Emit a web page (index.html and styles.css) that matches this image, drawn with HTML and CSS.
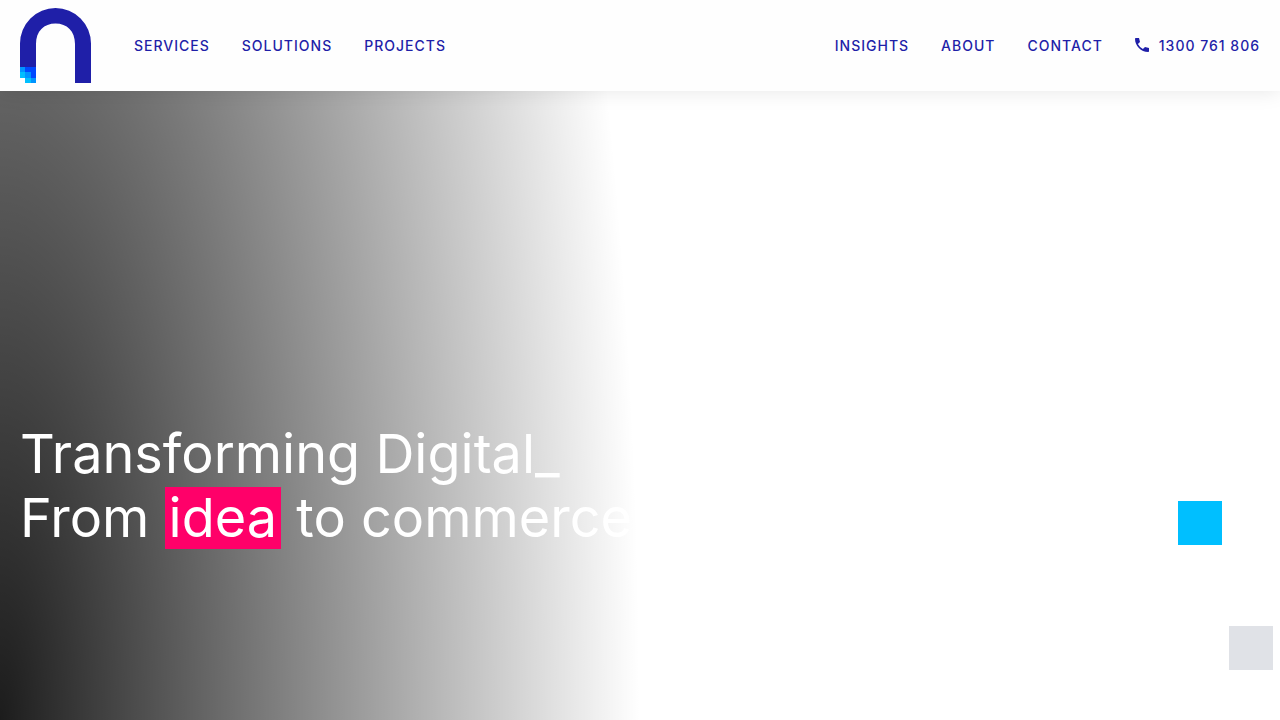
FILE: index.html
```html
<!DOCTYPE html>
<html lang="en">
<head>
    <meta charset="UTF-8">
    <meta name="viewport" content="width=device-width, initial-scale=1.0">
    <title>Transforming Digital</title>
    <link rel="stylesheet" href="styles.css">
</head>
<body>
    <header class="header">
        <a href="#" class="logo" aria-label="Home">
            <svg width="71" height="75" viewBox="0 0 71 75">
                <path fill="#1f1fa8" d="M0 75V35.500a35.500 35.500 0 0 1 71 0V75H55V36C55 23 47 15.500 35.500 15.500S16 23 16 36V75z"/>
                <!-- pixels at the foot of the logo -->
                <path fill="#0048ff" d="M0 59h16v16H0z"/>
                <path fill="#fefefe" d="M0 70h5v5H0z"/>
                <path fill="#0094ff" d="M0 59h5v5H0zM5 64h6v6H5zM11 70h5v5h-5z"/>
                <path fill="#00bfff" d="M0 64h5v6H0zM5 70h6v5H5z"/>
            </svg>
        </a>
        <nav class="nav nav-left">
            <a href="#">SERVICES</a>
            <a href="#">SOLUTIONS</a>
            <a href="#">PROJECTS</a>
        </nav>
        <nav class="nav nav-right">
            <a href="#">INSIGHTS</a>
            <a href="#">ABOUT</a>
            <a href="#">CONTACT</a>
            <a href="tel:1300761806" class="phone">
                <svg width="14" height="14" viewBox="0 0 14 14">
                    <path fill="currentColor" d="M.8 0H4l1 4-2.100 2.100a12 12 0 0 0 5 5L10 9l4 1v3.200a.8.8 0 0 1-.8.8C6 14 0 8 0 .8A.8.8 0 0 1 .8 0z"/>
                </svg>
                1300 761 806
            </a>
        </nav>
    </header>
    <main class="hero">
        <h1>Transforming Digital_<br>From <span class="highlight">idea</span> to commerce</h1>
        <div class="square square-blue"></div>
        <div class="square square-grey"></div>
    </main>
</body>
</html>
```
FILE: styles.css
```css
* {
    box-sizing: border-box;
}

body {
    margin: 0;
    min-height: 100vh;
    display: flex;
    flex-direction: column;
    background-color: #fff;
    font-family: Inter, sans-serif;
}

.header {
    position: relative;
    z-index: 1;
    display: flex;
    align-items: center;
    padding: 8px 20px;
    background-color: #fefefe;
    box-shadow: 0 0 20px rgba(0, 0, 0, 0.1);
}

.logo svg {
    display: block;
}

.nav {
    display: flex;
    gap: 32px;
}

.nav a {
    color: #1f1fa8;
    font-size: 14px;
    font-weight: 500;
    line-height: 20px;
    letter-spacing: 1px;
    text-decoration: none;
}

.nav-left {
    margin-left: 43px;
}

.nav-right {
    margin-left: auto;
}

.nav .phone {
    display: flex;
    align-items: center;
    gap: 10px;
}

.phone svg {
    margin-bottom: 2px;
}

.hero {
    position: relative;
    flex: 1;
    display: flex;
    align-items: flex-end;
    padding: 20px 20px 170px;
    overflow: hidden;
    background: radial-gradient(50% 320% at 0 100%, rgba(0, 0, 0, 0.89), rgba(0, 0, 0, 0));
}

.hero h1 {
    margin: 0;
    color: #fff;
    font-size: 54px;
    font-weight: 400;
    line-height: 64px;
}

.highlight {
    display: inline-block;
    padding: 0 4px;
    line-height: 62px;
    background-color: #ff0069;
}

.square {
    position: absolute;
    width: 44px;
    height: 44px;
}

.square-blue {
    right: 58px;
    bottom: 175px;
    background-color: #00bfff;
}

.square-grey {
    right: 7px;
    bottom: 50px;
    background-color: #e0e2e7;
}
```
